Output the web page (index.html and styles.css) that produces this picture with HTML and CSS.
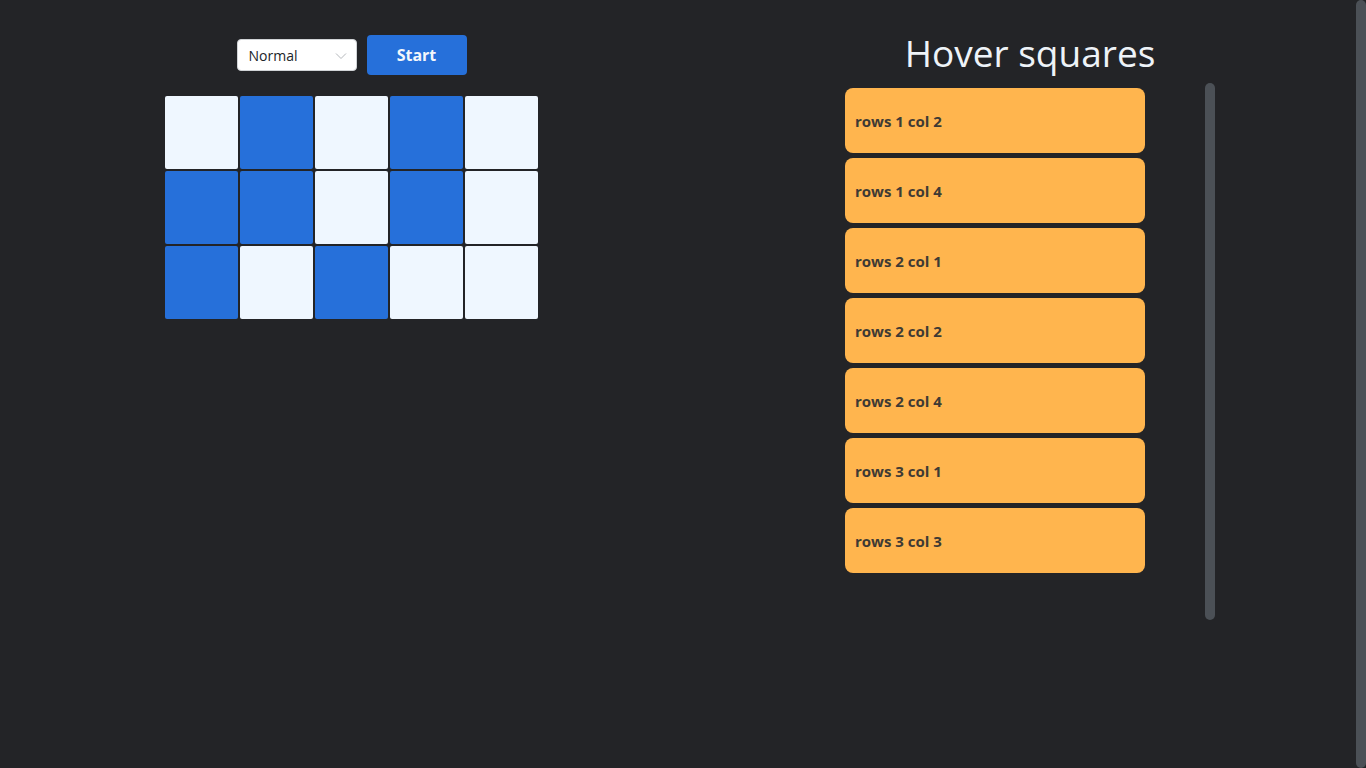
FILE: index.html
```html
<!DOCTYPE html>
<html lang="en">
<head>
<meta charset="utf-8">
<title>Hover squares</title>
<link rel="stylesheet" href="styles.css">
</head>
<body>
<div class="page">
  <section class="board">
    <div class="controls">
      <div class="select">
        <span>Normal</span>
        <svg class="chev" width="12" height="8" viewBox="0 0 12 8"><path d="M1 1.5 L6 6.5 L11 1.5" fill="none" stroke="#b5b8bc" stroke-width="1"/></svg>
      </div>
      <button class="start">Start</button>
    </div>
    <div class="grid">
      <div class="cell light"></div><div class="cell blue"></div><div class="cell light"></div><div class="cell blue"></div><div class="cell light"></div>
      <div class="cell blue"></div><div class="cell blue"></div><div class="cell light"></div><div class="cell blue"></div><div class="cell light"></div>
      <div class="cell blue"></div><div class="cell light"></div><div class="cell blue"></div><div class="cell light"></div><div class="cell light"></div>
    </div>
  </section>
  <section class="side">
    <h1 class="title">Hover squares</h1>
    <div class="listwrap">
      <ul class="list">
        <li class="item">rows 1 col 2</li>
        <li class="item">rows 1 col 4</li>
        <li class="item">rows 2 col 1</li>
        <li class="item">rows 2 col 2</li>
        <li class="item">rows 2 col 4</li>
        <li class="item">rows 3 col 1</li>
        <li class="item">rows 3 col 3</li>
      </ul>
      <div class="thumb"></div>
    </div>
  </section>
</div>
<div class="pagebar"></div>
</body>
</html>
```
FILE: styles.css
```css
* { box-sizing: border-box; }
html, body { margin: 0; padding: 0; }
body {
  background: #232427;
  font-family: "Open Sans", "Noto Sans", sans-serif;
  height: 768px;
  overflow: hidden;
}
.page {
  display: flex;
  padding-top: 35px;
}
.board {
  width: 703px;
  display: flex;
  flex-direction: column;
  align-items: center;
}
.controls {
  display: flex;
  align-items: center;
  gap: 10px;
  height: 40px;
}
.select {
  width: 120px;
  height: 32px;
  background: #fff;
  border: 1px solid #d0d3d6;
  border-radius: 4px;
  display: flex;
  align-items: center;
  justify-content: space-between;
  padding: 0 9px 0 11px;
  font-size: 14px;
  color: #212529;
}
.chev { margin-top: 1px; }
.start {
  width: 100px;
  height: 40px;
  background: #2670da;
  color: #f4f7fb;
  border: none;
  border-radius: 4px;
  font-family: "Open Sans", sans-serif;
  font-weight: 700;
  font-size: 16px;
  padding: 0;
}
.grid {
  margin-top: 21px;
  display: grid;
  grid-template-columns: repeat(5, 73px);
  grid-auto-rows: 73px;
  gap: 2px;
}
.cell { border-radius: 2px; }
.light { background: #eff7ff; }
.blue { background: #2670da; }
.side {
  margin-left: 142px;
  width: 370px;
  display: flex;
  flex-direction: column;
}
.title {
  margin: -6px 0 0 0;
  text-align: center;
  font-weight: 400;
  font-size: 37px;
  line-height: 48px;
  color: #eef3f8;
  height: 54px;
}
.listwrap {
  display: flex;
  justify-content: space-between;
  height: 537px;
}
.list {
  list-style: none;
  margin: 0;
  padding: 5px 0 0 0;
  display: flex;
  flex-direction: column;
  gap: 5px;
}
.item {
  width: 300px;
  height: 65px;
  background: #ffb54e;
  border-radius: 8px;
  display: flex;
  align-items: center;
  padding-left: 10px;
  font-weight: 700;
  font-size: 15px;
  color: #3e3a34;
}
.thumb {
  width: 10px;
  height: 537px;
  background: #4b5056;
  border-radius: 5px;
}
.pagebar {
  position: fixed;
  top: 0;
  right: 0;
  width: 10px;
  height: 768px;
  background: #4b5056;
  border-radius: 5px 5px 5px 5px;
}
```
